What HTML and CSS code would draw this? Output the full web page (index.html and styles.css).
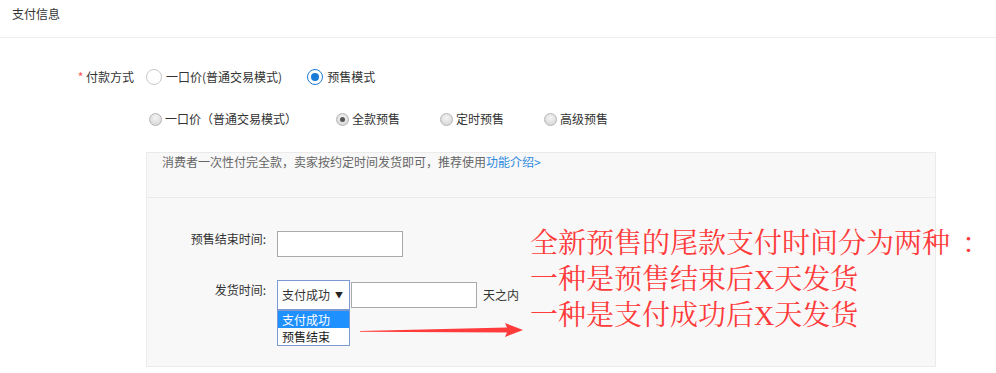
FILE: index.html
```html
<!DOCTYPE html>
<html lang="zh-CN">
<head>
<meta charset="utf-8">
<title>支付信息</title>
<link rel="stylesheet" href="styles.css">
</head>
<body>
<div class="page">
  <div class="section-title">支付信息</div>

  <div class="form-row row-mode">
    <div class="row-label"><span class="req">*</span> 付款方式</div>
    <label class="radio-item big">
      <span class="radio"></span>
      <span>一口价(普通交易模式)</span>
    </label>
    <label class="radio-item big">
      <span class="radio checked"></span>
      <span>预售模式</span>
    </label>
  </div>

  <div class="form-row row-type">
    <label class="radio-item small">
      <span class="sradio"></span>
      <span>一口价（普通交易模式）</span>
    </label>
    <label class="radio-item small">
      <span class="sradio on"></span>
      <span>全款预售</span>
    </label>
    <label class="radio-item small">
      <span class="sradio"></span>
      <span>定时预售</span>
    </label>
    <label class="radio-item small">
      <span class="sradio"></span>
      <span>高级预售</span>
    </label>
  </div>

  <div class="panel">
    <div class="panel-head">消费者一次性付完全款，卖家按约定时间发货即可，推荐使用<a class="link">功能介绍&gt;</a></div>
    <div class="panel-body">
      <div class="field">
        <div class="field-label">预售结束时间:</div>
        <input class="text-input" type="text">
      </div>
      <div class="field field-ship">
        <div class="field-label">发货时间:</div>
        <div class="select-wrap">
          <div class="select"><span>支付成功</span><span class="caret">▼</span></div>
          <ul class="dropdown">
            <li class="opt active">支付成功</li>
            <li class="opt">预售结束</li>
          </ul>
        </div>
        <input class="text-input short" type="text">
        <span class="unit">天之内</span>
      </div>
    </div>
  </div>

  <svg class="arrow" width="170" height="20" viewBox="0 0 170 20">
    <polygon points="0,11 147,7.5 145,3 163,10 145,17 147,12.5 0,11.8" fill="#ff3b3b"/>
  </svg>

  <div class="note">
    <div>全新预售的尾款支付时间分为两种<span class="colon">：</span></div>
    <div>一种是预售结束后X天发货</div>
    <div>一种是支付成功后X天发货</div>
  </div>
</div>
</body>
</html>
```

FILE: styles.css
```css
* { box-sizing: border-box; }
html, body { margin: 0; padding: 0; background: #fff; }
body {
  font-family: "Noto Sans CJK SC", "Microsoft YaHei", sans-serif;
  font-size: 12px;
  color: #333;
}
.page { position: relative; width: 996px; height: 373px; overflow: hidden; }

.section-title {
  height: 38px;
  padding: 6px 0 0 12px;
  line-height: 16px;
  border-bottom: 1px solid #eee;
  color: #333;
}

.form-row { display: flex; align-items: center; height: 20px; }
.row-mode { margin-top: 29px; }
.row-label { width: 134px; text-align: right; margin-right: 12px; line-height: 20px; }
.req { color: #f55; }

.radio-item { display: flex; align-items: center; line-height: 20px; white-space: nowrap; }
.radio-item.big { margin-right: 25px; }
.radio {
  width: 16px; height: 16px; border-radius: 50%;
  border: 1px solid #c8c8c8; background: #fff;
  margin-right: 4px; position: relative;
}
.radio.checked { border-color: #1a7bd6; }
.radio.checked::after {
  content: ""; position: absolute; left: 3px; top: 3px;
  width: 8px; height: 8px; border-radius: 50%; background: #1a7bd6;
}

.row-type { margin-top: 22px; padding-left: 146px; }
.radio-item.small { margin-right: 37px; }
.radio-item.small:first-child { margin-right: 36px; }
.sradio {
  width: 13px; height: 13px; border-radius: 50%;
  border: 1px solid #b5b5b5;
  background: radial-gradient(circle at 50% 35%, #f4f4f4 0%, #dcdcdc 70%, #cfcfcf 100%);
  margin: 0 3px; position: relative;
}
.sradio.on::after {
  content: ""; position: absolute; left: 3px; top: 3px;
  width: 5px; height: 5px; border-radius: 50%; background: #555;
}

.panel {
  margin: 23px 0 0 146px;
  width: 790px;
  height: 215px;
  background: #f8f8f8;
  border: 1px solid #ebebeb;
}
.panel-head {
  height: 45px;
  padding: 0 0 0 15px;
  line-height: 18px;
  color: #666;
  border-bottom: 1px solid #ebebeb;
}
.link { color: #2d8ae0; text-decoration: none; }

.panel-body { padding-top: 33px; }
.field { display: flex; align-items: flex-start; }
.field-label { width: 119px; margin-right: 11px; text-align: right; line-height: 16px; color: #333; }
.text-input {
  width: 126px; height: 26px; border: 1px solid #a9a9a9; background: #fff;
  margin: 0; padding: 0 4px; font: inherit; outline: none;
}
.field-ship { margin-top: 23px; align-items: center; }
.field-ship .field-label { align-self: flex-start; padding-top: 2px; }
.select-wrap { position: relative; width: 73px; height: 30px; }
.select {
  height: 30px; border: 1px solid #7b9ad2; background: #fff;
  display: flex; align-items: center; justify-content: space-between;
  padding: 0 6px 0 4px; line-height: 16px; color: #333;
}
.caret { font-size: 8px; color: #222; }
.dropdown {
  position: absolute; left: 0; top: 30px; width: 73px;
  margin: 0; padding: 0; list-style: none;
  background: #fff; border: 1px solid #7b9ad2;
}
.opt { height: 17px; line-height: 17px; padding-left: 4px; color: #222; }
.opt.active { background: #1e90ff; color: #fff; }
.text-input.short { margin-left: 1px; }
.unit { margin-left: 6px; line-height: 16px; }

.arrow { position: absolute; left: 360px; top: 320px; }

.note {
  position: absolute; left: 530px; top: 226px;
  font-family: "Liberation Serif", "Noto Serif CJK SC", "Noto Sans CJK SC", serif;
  font-size: 28px; line-height: 36px;
  color: #ff3b3b; white-space: nowrap;
}
.colon { padding-left: 12px; }
```
